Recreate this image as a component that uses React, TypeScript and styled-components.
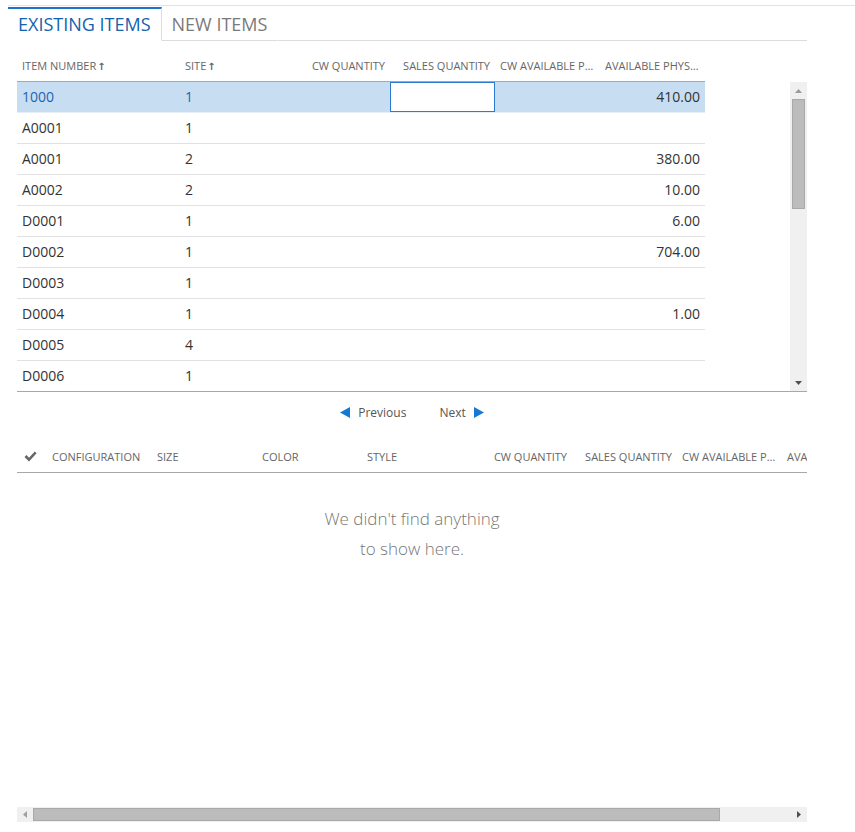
import React from "react";
import styled, { createGlobalStyle } from "styled-components";

const Global = createGlobalStyle`
  html, body { margin: 0; padding: 0; background: #fff; }
  body { font-family: "Segoe UI", "Open Sans", "Noto Sans", sans-serif; color: #333; }
  * { box-sizing: border-box; }
`;

const Page = styled.div`
  width: 855px;
  height: 832px;
  display: flex;
  flex-direction: column;
  overflow: hidden;
`;

const TopRule = styled.div`
  margin: 5px 0 0 8px;
  height: 1px;
  background: #e2e2e2;
`;

const TabStrip = styled.div`
  display: flex;
  margin: 1px 48px 0 8px;
  height: 34px;
`;

const Tab = styled.div<{ $active?: boolean }>`
  display: flex;
  align-items: center;
  padding: 0 10px 2px;
  font-size: 18px;
  color: ${(p) => (p.$active ? "#1262ad" : "#7a7a7a")};
  border-top: 2px solid ${(p) => (p.$active ? "#1a73c8" : "transparent")};
  border-right: 1px solid ${(p) => (p.$active ? "#dcdcdc" : "transparent")};
  border-bottom: 1px solid ${(p) => (p.$active ? "transparent" : "#dcdcdc")};
`;

const TabFill = styled.div`
  flex: 1;
  border-bottom: 1px solid #dcdcdc;
`;

const Body = styled.div`
  margin: 0 48px 0 17px;
  display: flex;
  flex-direction: column;
`;

const TOP_COLS = "163px 105px 105px 105px 105px 105px";
const BOTTOM_COLS = "30px 105px 105px 105px 105px 105px 105px 105px 105px";

const HeaderRow = styled.div<{ $cols: string; $width: string; $top: number }>`
  display: grid;
  grid-template-columns: ${(p) => p.$cols};
  width: ${(p) => p.$width};
  height: 31px;
  margin-top: ${(p) => p.$top}px;
  padding-bottom: 1px;
  border-bottom: 1px solid #a8a8a8;
  align-items: center;
  overflow: hidden;
`;

const HeadCell = styled.div<{ $right?: boolean }>`
  padding: 0 5px;
  font-size: 11px;
  color: #666;
  text-transform: uppercase;
  white-space: nowrap;
  overflow: hidden;
  text-overflow: ellipsis;
  text-align: ${(p) => (p.$right ? "right" : "left")};
`;

const SortArrow = styled.span`
  font-family: "DejaVu Sans", sans-serif;
  font-size: 10px;
  font-weight: bold;
  margin-left: 1px;
`;

const ScrollArea = styled.div`
  display: flex;
  height: 310px;
  border-bottom: 1px solid #a8a8a8;
`;

const RowsPane = styled.div`
  width: 688px;
  overflow: hidden;
`;

const Spacer = styled.div`
  flex: 1;
`;

const Row = styled.div<{ $selected?: boolean }>`
  display: grid;
  grid-template-columns: ${TOP_COLS};
  height: 31px;
  align-items: center;
  padding-bottom: 2px;
  border-bottom: 1px solid ${(p) => (p.$selected ? "#e6eef6" : "#e2e2e2")};
  background: ${(p) => (p.$selected ? "#c7def2" : "#fff")};
`;

const Cell = styled.div<{ $right?: boolean; $link?: boolean }>`
  padding: 0 5px;
  font-size: 14px;
  white-space: nowrap;
  overflow: hidden;
  color: ${(p) => (p.$link ? "#1d63b0" : "#333")};
  text-align: ${(p) => (p.$right ? "right" : "left")};
`;

const InputBox = styled.div`
  align-self: stretch;
  margin-bottom: -2px;
  background: #fff;
  border: 1px solid #2b7bd4;
`;

const VScroll = styled.div`
  width: 17px;
  background: #f0f0f0;
  display: flex;
  flex-direction: column;
`;

const ScrollBtn = styled.div`
  height: 17px;
  display: flex;
  align-items: center;
  justify-content: center;
`;

const VThumb = styled.div`
  margin: 0 2px;
  height: 110px;
  background: #bcbcbc;
  border: 1px solid #a9a9a9;
`;

const Pager = styled.div`
  display: flex;
  justify-content: center;
  gap: 33px;
  height: 50px;
  padding-top: 12px;
`;

const PagerBtn = styled.div`
  display: flex;
  align-items: flex-start;
  gap: 8px;
  font-size: 12px;
  line-height: 17px;
  color: #555;
`;

const Tri = styled.svg`
  margin-top: 3px;
`;

const CheckWrap = styled.div`
  padding-left: 7px;
  display: flex;
  align-items: center;
`;

const Empty = styled.div`
  margin-top: 31px;
  text-align: center;
  font-size: 17px;
  line-height: 30px;
  font-weight: 300;
  color: #777;
`;

const HScroll = styled.div`
  margin: auto 48px 10px 17px;
  height: 15px;
  background: #f0f0f0;
  display: flex;
  align-items: center;
`;

const HBtn = styled.div`
  width: 16px;
  height: 15px;
  display: flex;
  align-items: center;
  justify-content: center;
`;

const HThumb = styled.div`
  width: 687px;
  height: 13px;
  background: #bcbcbc;
  border: 1px solid #a9a9a9;
`;

type Item = { item: string; site: string; phys: string; selected?: boolean };

const rows: Item[] = [
  { item: "1000", site: "1", phys: "410.00", selected: true },
  { item: "A0001", site: "1", phys: "" },
  { item: "A0001", site: "2", phys: "380.00" },
  { item: "A0002", site: "2", phys: "10.00" },
  { item: "D0001", site: "1", phys: "6.00" },
  { item: "D0002", site: "1", phys: "704.00" },
  { item: "D0003", site: "1", phys: "" },
  { item: "D0004", site: "1", phys: "1.00" },
  { item: "D0005", site: "4", phys: "" },
  { item: "D0006", site: "1", phys: "" },
];

export default function App() {
  return (
    <Page>
      <Global />
      <TopRule />
      <TabStrip>
        <Tab $active>EXISTING ITEMS</Tab>
        <Tab>NEW ITEMS</Tab>
        <TabFill />
      </TabStrip>
      <Body>
        <HeaderRow $cols={TOP_COLS} $width="688px" $top={10}>
          <HeadCell>
            Item number<SortArrow>↑</SortArrow>
          </HeadCell>
          <HeadCell>
            Site<SortArrow>↑</SortArrow>
          </HeadCell>
          <HeadCell $right>CW quantity</HeadCell>
          <HeadCell $right>Sales quantity</HeadCell>
          <HeadCell>CW available physical</HeadCell>
          <HeadCell>Available physical</HeadCell>
        </HeaderRow>
        <ScrollArea>
          <RowsPane>
            {rows.map((r, i) => (
              <Row key={i} $selected={r.selected}>
                <Cell $link={r.selected}>{r.item}</Cell>
                <Cell $link={r.selected}>{r.site}</Cell>
                <Cell $right />
                {r.selected ? <InputBox /> : <Cell $right />}
                <Cell $right />
                <Cell $right>{r.phys}</Cell>
              </Row>
            ))}
          </RowsPane>
          <Spacer />
          <VScroll>
            <ScrollBtn>
              <svg width="7" height="4" viewBox="0 0 7 4">
                <path d="M0 4 L3.5 0 L7 4 Z" fill="#9a9a9a" />
              </svg>
            </ScrollBtn>
            <VThumb />
            <Spacer />
            <ScrollBtn>
              <svg width="7" height="4" viewBox="0 0 7 4">
                <path d="M0 0 L3.5 4 L7 0 Z" fill="#505050" />
              </svg>
            </ScrollBtn>
          </VScroll>
        </ScrollArea>
        <Pager>
          <PagerBtn>
            <Tri width="10" height="11" viewBox="0 0 10 11">
              <path d="M10 0 L0 5.5 L10 11 Z" fill="#1479d2" />
            </Tri>
            Previous
          </PagerBtn>
          <PagerBtn>
            Next
            <Tri width="10" height="11" viewBox="0 0 10 11">
              <path d="M0 0 L10 5.5 L0 11 Z" fill="#1479d2" />
            </Tri>
          </PagerBtn>
        </Pager>
        <HeaderRow $cols={BOTTOM_COLS} $width="790px" $top={0}>
          <CheckWrap>
            <svg width="13" height="11" viewBox="0 0 13 11">
              <path d="M0.5 6 L2.5 4 L5 6.8 L10.8 0.5 L12.6 2.3 L5 10.5 Z" fill="#666" />
            </svg>
          </CheckWrap>
          <HeadCell>Configuration</HeadCell>
          <HeadCell>Size</HeadCell>
          <HeadCell>Color</HeadCell>
          <HeadCell>Style</HeadCell>
          <HeadCell $right>CW quantity</HeadCell>
          <HeadCell $right>Sales quantity</HeadCell>
          <HeadCell>CW available physical</HeadCell>
          <HeadCell>Available physical</HeadCell>
        </HeaderRow>
        <Empty>
          We didn't find anything
          <br />
          to show here.
        </Empty>
      </Body>
      <HScroll>
        <HBtn>
          <svg width="4" height="7" viewBox="0 0 4 7">
            <path d="M4 0 L0 3.5 L4 7 Z" fill="#a0a0a0" />
          </svg>
        </HBtn>
        <HThumb />
        <Spacer />
        <HBtn>
          <svg width="4" height="7" viewBox="0 0 4 7">
            <path d="M0 0 L4 3.5 L0 7 Z" fill="#505050" />
          </svg>
        </HBtn>
      </HScroll>
    </Page>
  );
}
